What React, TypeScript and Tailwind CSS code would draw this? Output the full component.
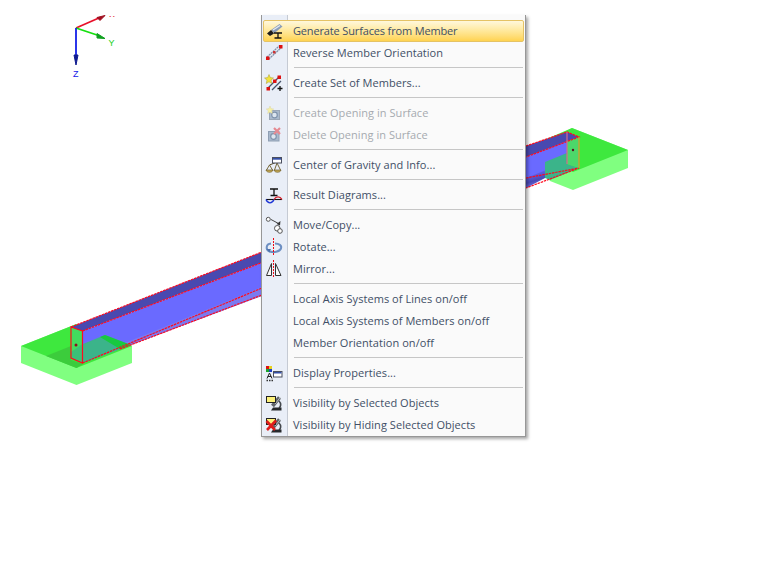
import React from 'react';

const Icon: React.FC<{ children: React.ReactNode }> = ({ children }) => (
  <svg width="20" height="20" viewBox="0 0 20 20" className="shrink-0">
    {children}
  </svg>
);

const Beam = ({ x, y, h }: { x: number; y: number; h: number }) => (
  <path d={`M${x - 4} ${y}H${x + 4}M${x} ${y}V${y + h}M${x - 3.5} ${y + h}H${x + 3.5}`} stroke="#111" strokeWidth="1.3" fill="none" />
);

const GenerateIcon = () => (
  <Icon>
    <path d="M7 9L15.500 3L18.500 5.500L10 12.500Z" fill="#8a9db8" />
    <path d="M9 9L16 4.500" stroke="#e3e9f2" strokeWidth="1.300" />
    <path d="M3 12.500L7 9L10 12.500L6 15Z" fill="#1c1c1c" />
    <Beam x={14} y={12} h={5} />
  </Icon>
);

const ReverseIcon = () => (
  <Icon>
    <path d="M4 15L16 4" stroke="#7f90aa" strokeWidth="4" strokeDasharray="2 .6" />
    <path d="M4 15L16 4" stroke="#e8edf4" strokeWidth="1.300" />
    <rect x="2" y="13.500" width="3.500" height="3.500" fill="#d11" />
    <rect x="15" y="2" width="3.500" height="3.500" fill="#d11" />
    <rect x="9" y="8" width="2.500" height="2.500" fill="#c33" />
  </Icon>
);

const CreateSetIcon = () => (
  <Icon>
    <path d="M4 15L15 4M8 17L17 8" stroke="#46536b" strokeWidth="1.300" />
    <path d="M5 1.500L6.300 4.600L9.500 5L7 7.200L7.800 10.500L5 8.800L2.200 10.500L3 7.200L.5 5L3.700 4.600Z" fill="#f2e33c" stroke="#a89a30" strokeWidth=".5" />
    <rect x="2.500" y="14" width="3.500" height="3.500" fill="#d11" />
    <rect x="13.500" y="2.500" width="3.500" height="3.500" fill="#d11" />
    <rect x="9" y="6.500" width="3.500" height="3.500" fill="#d11" />
    <path d="M13.500 15.500H18.500M16 13V18" stroke="#111" strokeWidth="1.300" />
  </Icon>
);

const CreateOpeningIcon = () => (
  <Icon>
    <rect x="5.500" y="7.500" width="10" height="9" fill="#a9b9cc" stroke="#9aa6b6" />
    <circle cx="10.500" cy="12" r="2.800" fill="#dce5ef" stroke="#7f93ac" strokeWidth="1.200" />
    <path d="M6 3L7 5.600L9.800 6L7.700 7.800L8.400 10.600L6 9.200L3.600 10.600L4.300 7.800L2.200 6L5 5.600Z" fill="#f5f0a6" stroke="#d6d0a0" strokeWidth=".4" />
  </Icon>
);

const DeleteOpeningIcon = () => (
  <Icon>
    <rect x="4.500" y="6.500" width="10.500" height="9.500" fill="#a9b9cc" stroke="#8f9fb4" />
    <circle cx="9.500" cy="11.500" r="2.800" fill="#dce5ef" stroke="#7f93ac" strokeWidth="1.200" />
    <path d="M10 3L16 9M16 3L10 9" stroke="#e58a92" strokeWidth="2.200" />
  </Icon>
);

const GravityIcon = () => (
  <Icon>
    <path d="M5.500 10L13 7" stroke="#5b4d22" strokeWidth="1" />
    <path d="M5.500 10L2.500 15M5.500 10L8.500 15M13 8L10.500 15M13 8L16.500 15" fill="none" stroke="#6b5a26" strokeWidth=".9" />
    <path d="M2 15C2.500 18 8.500 18 9 15ZM10 15C10.500 18 16.500 18 17 15Z" fill="#c9ad59" stroke="#6b5a26" strokeWidth=".7" />
    <rect x="8.500" y="2.500" width="9" height="5.500" fill="#fff" stroke="#4a4f5e" />
    <rect x="9" y="3" width="8" height="1.700" fill="#3550a8" />
  </Icon>
);

const ResultIcon = () => (
  <Icon>
    <Beam x={10} y={4} h={6.500} />
    <path d="M2 14.500H18" stroke="#111" strokeWidth="1.100" />
    <path d="M2 14.500C4 19 8 19 10 14.500" stroke="#1d35d6" strokeWidth="1.400" fill="none" />
    <path d="M10 14.500C12 11 16 11 18 14.500" stroke="#d8202a" strokeWidth="1.400" fill="none" />
  </Icon>
);

const MoveIcon = () => (
  <Icon>
    <circle cx="4.300" cy="4.300" r="2" fill="#fff" stroke="#444" strokeWidth=".9" />
    <path d="M7 4.500L14.500 8.500" stroke="#444" strokeWidth="1" />
    <path d="M16.500 6L16 10.500L12.500 9Z" fill="#333" />
    <circle cx="13.300" cy="13.300" r="2.800" fill="#fff" stroke="#444" strokeWidth=".9" />
    <circle cx="16" cy="16" r="2.300" fill="#fff" stroke="#444" strokeWidth=".9" />
  </Icon>
);

const RotateIcon = () => (
  <Icon>
    <path d="M7 6.500C1.500 7 1.500 13 5.500 14.500C9.500 15.500 15.500 15 17 11.500C18 8.500 15 6.500 11 6.500" stroke="#6d8fc2" strokeWidth="2" fill="none" />
    <path d="M2.500 12L7 12L5.500 15.500Z" fill="#4d72ad" />
    <path d="M9.500 1V18" stroke="#ee0a14" strokeWidth="1" strokeDasharray="2 1" />
  </Icon>
);

const MirrorIcon = () => (
  <Icon>
    <path d="M7.500 4.500V16.500H2.500ZM11.500 4.500V16.500H17Z" fill="#fbfbfb" stroke="#333" strokeWidth="1" />
    <path d="M9.500 1V19" stroke="#ee0a14" strokeWidth="1" strokeDasharray="2 1" />
  </Icon>
);

const DisplayIcon = () => (
  <Icon>
    <rect x="2" y="3" width="3" height="3" fill="#d11" />
    <rect x="5" y="3" width="3" height="3" fill="#e7d21c" />
    <rect x="2" y="6" width="3" height="3" fill="#1aa52b" />
    <rect x="5" y="6" width="3" height="3" fill="#1f3fc4" />
    <path d="M3 15.500L5.500 10L8 15.500M3.800 13.500H7.200" stroke="#222" strokeWidth="1" fill="none" />
    <path d="M2.500 17.500H4M5 17.500H6.500M7.500 17.500H9" stroke="#333" strokeWidth="1.400" />
    <rect x="9.500" y="8.500" width="8.500" height="5.500" fill="#fff" stroke="#4a4f5e" />
    <rect x="10" y="9" width="7.500" height="1.500" fill="#3550a8" />
  </Icon>
);

const Microscope = () => (
  <>
    <path d="M8.500 13L15.500 4.500" stroke="#5f6468" strokeWidth="3.800" />
    <path d="M11 11L16.500 4" stroke="#c9cdd0" strokeWidth=".8" />
    <path d="M15 8C17.500 10.500 17 13.500 15 15" stroke="#44484c" strokeWidth="1.600" fill="none" />
    <path d="M7 17.500H17.500V14.500H9Z" fill="#26292c" />
  </>
);

const VisibleIcon = () => (
  <Icon>
    <Microscope />
    <rect x="2.500" y="3.500" width="9" height="6" fill="#fdf27a" stroke="#222" />
  </Icon>
);

const HideIcon = () => (
  <Icon>
    <Microscope />
    <rect x="2.500" y="3.500" width="9" height="6" fill="#fdf27a" stroke="#222" />
    <path d="M2.500 6L11 15M12 5.500L3 15" stroke="#de1b1b" strokeWidth="2.600" />
  </Icon>
);

type Entry = { label: string; icon?: React.ReactNode; disabled?: boolean; active?: boolean } | 'sep';

const entries: Entry[] = [
  { label: 'Generate Surfaces from Member', icon: <GenerateIcon />, active: true },
  { label: 'Reverse Member Orientation', icon: <ReverseIcon /> },
  'sep',
  { label: 'Create Set of Members...', icon: <CreateSetIcon /> },
  'sep',
  { label: 'Create Opening in Surface', icon: <CreateOpeningIcon />, disabled: true },
  { label: 'Delete Opening in Surface', icon: <DeleteOpeningIcon />, disabled: true },
  'sep',
  { label: 'Center of Gravity and Info...', icon: <GravityIcon /> },
  'sep',
  { label: 'Result Diagrams...', icon: <ResultIcon /> },
  'sep',
  { label: 'Move/Copy...', icon: <MoveIcon /> },
  { label: 'Rotate...', icon: <RotateIcon /> },
  { label: 'Mirror...', icon: <MirrorIcon /> },
  'sep',
  { label: 'Local Axis Systems of Lines on/off' },
  { label: 'Local Axis Systems of Members on/off' },
  { label: 'Member Orientation on/off' },
  'sep',
  { label: 'Display Properties...', icon: <DisplayIcon /> },
  'sep',
  { label: 'Visibility by Selected Objects', icon: <VisibleIcon /> },
  { label: 'Visibility by Hiding Selected Objects', icon: <HideIcon /> },
];

const red = { stroke: '#ff0a1e', strokeWidth: 1.2, strokeDasharray: '2.5 .8', fill: 'none' };

// the 3D model: two footings, the beam and the axis cross
const Scene = () => (
  <svg width="760" height="582" viewBox="0 0 760 582" className="absolute inset-0">
    <defs>
      <clipPath id="xclip">
        <rect x="100" y="14" width="24" height="3" />
      </clipPath>
      <linearGradient id="under" gradientUnits="userSpaceOnUse" x1="200" y1="277" x2="203" y2="291">
        <stop offset="0" stopColor="#6a6aff" />
        <stop offset="0.55" stopColor="#4a4ab4" />
        <stop offset="1" stopColor="#7a7af0" />
      </linearGradient>
      <linearGradient id="under2" gradientUnits="userSpaceOnUse" x1="535" y1="170" x2="540" y2="186">
        <stop offset="0" stopColor="#6a6aff" />
        <stop offset="0.6" stopColor="#4a4ab4" />
        <stop offset="1" stopColor="#7a7af0" />
      </linearGradient>
    </defs>

    {/* left footing */}
    <path d="M21 346L76.500 324L132 346V363L76.500 385L21 363Z" fill="#80ff80" />
    <path d="M21 346L76.500 324L132 346L76.500 368Z" fill="#3ee83e" />
    <path d="M46 356L71 346V360L83 364L76.500 368Z" fill="#3ccc3c" />

    {/* left end of the beam */}
    <path d="M71 327L262 252V262.500L82.500 331Z" fill="#4949b0" />
    <path d="M82.500 331L262 262.500V295L120 349L82.500 363Z" fill="#6a6aff" />
    <path d="M120 345L262 287V296L120 349Z" fill="url(#under)" />
    <path d="M82.500 331V363L71 358V327Z" fill="#42dc5e" />
    <path d="M71 352L82.500 344V363L71 358Z" fill="#3bc078" />
    <path d="M83 344L105 335L131 345L83 363Z" fill="#3bb48a" />
    <path d="M105 335L131 345L120 349L100 337Z" fill="#18c840" />
    <path d="M71 327L262 252M82.500 331L262 262.500M82.500 363L262 288M120 349L262 295" {...red} />
    <path d="M71 327V358L82.500 363V331L71 327Z" stroke="#ff0a1e" strokeWidth="1.200" fill="none" />
    <circle cx="76" cy="345" r="1.500" fill="#8a1020" />

    {/* right footing */}
    <path d="M572 128L628 150V168L573 190L550 181L530 150Z" fill="#80ff80" />
    <path d="M572 128L628 150L573 172L545 160L530 146Z" fill="#3ee83e" />

    {/* right end of the beam */}
    <path d="M526 146L567 132L579 137L526 157Z" fill="#4949b0" />
    <path d="M526 157L567 141V165L526 188Z" fill="#6a6aff" />
    <path d="M526 178L566 162L568 166L526 188Z" fill="url(#under2)" />
    <path d="M545 162L567 153V164L579 168L550 180L545 178Z" fill="#3bb48a" />
    <path d="M567 141L579 137V168L567 164Z" fill="#4cd76a" />
    <path d="M526 146L567 132L579 137L526 157M526 178L579 168L526 188" {...red} />
    <path d="M567 132V164" stroke="#d96a8a" strokeWidth="1.200" />
    <path d="M579 137V168" stroke="#d99a30" strokeWidth="1.200" />
    <circle cx="573" cy="150" r="1.200" fill="#5a1020" />

    {/* axis cross */}
    <path d="M76 28L100 17.500" stroke="#e8102a" strokeWidth="1.800" />
    <path d="M97 17.500L105 15.500L100 20.500Z" fill="#a01020" stroke="#a01020" />
    <path d="M76 28L100 36" stroke="#16e010" strokeWidth="1.800" />
    <path d="M97 33.500L105 38.500L97 38Z" fill="#10a020" stroke="#10a020" />
    <path d="M76 28V56" stroke="#1420e8" strokeWidth="1.800" />
    <path d="M74 55H78L76 65Z" fill="#101c90" stroke="#101c90" />
    <g fontFamily="'Liberation Sans', sans-serif" fontSize="9">
      <text x="109" y="22" fill="#e01020" clipPath="url(#xclip)">X</text>
      <text x="108.500" y="46" fill="#18d018">Y</text>
      <text x="73" y="77" fill="#1420e8">Z</text>
    </g>
  </svg>
);

export default function App() {
  return (
    <div className="relative w-[760px] h-[582px] bg-white overflow-hidden">
      <Scene />

      <div
        className="absolute left-[261px] top-[15px] w-[265px] flex flex-col pt-[5px] bg-[#fafafa] border-x border-b border-[#979797] shadow-[2px_2px_3px_rgba(0,0,0,0.35)] text-[11px] tracking-[0.05px]"
        style={{ fontFamily: "'Open Sans', sans-serif" }}
      >
        <div className="absolute left-0 top-0 bottom-0 w-[26px] bg-[#e9eef7] border-r border-[#c5cad3]" />
        {entries.map((entry, i) => {
          if (entry === 'sep') {
            return (
              <div key={i} className="relative h-2 pt-[3px] pl-8 pr-[2px]">
                <div className="h-px w-full bg-[#c6c6c6]" />
              </div>
            );
          }
          return (
            <div
              key={entry.label}
              className={
                'relative h-[22px] flex items-center mx-[1px] ' +
                (entry.active
                  ? 'border border-[#e5c365] rounded-[2px] bg-gradient-to-b from-[#fff8dc] via-[#ffe89a] to-[#ffd34f]'
                  : 'border border-transparent')
              }
            >
              <div className="w-[22px] h-5 flex items-center justify-start shrink-0">{entry.icon}</div>
              <span
                className={
                  'ml-[7px] whitespace-nowrap ' +
                  (entry.disabled ? 'text-[#a6aab0]' : 'text-[#414f66]') +
                  (entry.active ? ' tracking-[-0.15px]' : '')
                }
              >
                {entry.label}
              </span>
            </div>
          );
        })}
      </div>
    </div>
  );
}
